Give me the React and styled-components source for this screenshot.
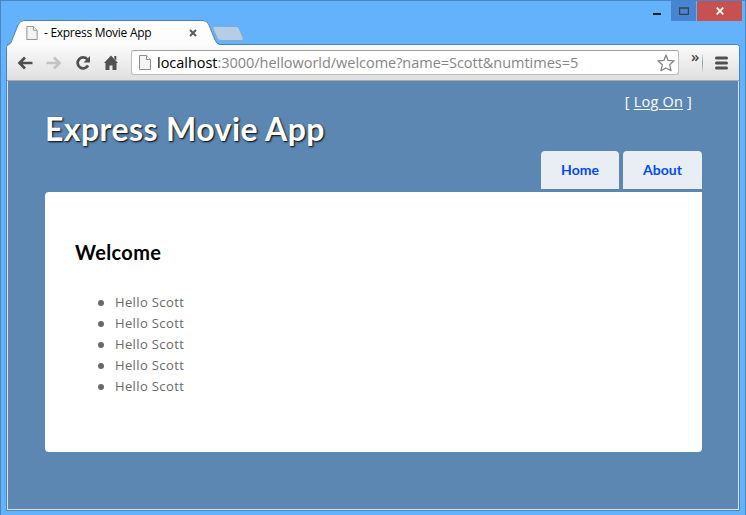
import React from "react";
import styled, { createGlobalStyle } from "styled-components";

const GlobalStyle = createGlobalStyle`
  * { box-sizing: border-box; }
  body { margin: 0; overflow: hidden; }
`;

const uiFont = `"Open Sans", "Noto Sans", sans-serif`;
const siteFont = `"Lato", "Noto Sans", sans-serif`;

const BrowserWindow = styled.div`
  width: 746px;
  height: 515px;
  display: flex;
  flex-direction: column;
  background: #65b2fc;
  border: 1px solid #4786c1;
  border-bottom: 0;
  padding: 0 5px 4px;
  font-family: ${uiFont};
`;

const TitleBar = styled.header`
  height: 43px;
  flex: none;
  display: flex;
  justify-content: space-between;
`;

const TabStrip = styled.div`
  display: flex;
  align-items: flex-end;
`;

const Tab = styled.div`
  position: relative;
  z-index: 1;
  width: 214px;
  height: 25px;
  margin-bottom: -1px;
  padding: 1px 23px 0 20px;
  display: flex;
  align-items: center;
`;

const TabShape = styled.svg`
  position: absolute;
  left: 0;
  top: 0;
`;

const TabTitle = styled.span`
  position: relative;
  flex: 1;
  margin-left: 6px;
  font-size: 12px;
  line-height: 16px;
  letter-spacing: -0.28px;
  color: #000;
  white-space: nowrap;
`;

const Icon = styled.svg`
  position: relative;
  display: block;
  flex: none;
`;

const NewTab = styled.svg`
  display: block;
  margin: 0 0 3px -8px;
`;

const Controls = styled.div`
  display: flex;
  align-items: flex-start;
  margin-right: -2px;
`;

const Control = styled.button`
  width: ${(p) => p.$width}px;
  height: 20px;
  margin: 0 ${(p) => p.$gap || 0}px 0 0;
  padding: 0;
  border: 0;
  display: flex;
  align-items: center;
  justify-content: center;
  background: ${(p) => p.$bg || "transparent"};
`;

const Client = styled.div`
  flex: 1;
  display: flex;
  flex-direction: column;
  border: 1px solid #4786b9;
  border-radius: 4px 4px 0 0;
  background: #dce6ee;
  padding: 0 1px 1px;
  overflow: hidden;
`;

const Toolbar = styled.div`
  height: 36px;
  flex: none;
  display: flex;
  align-items: center;
  margin: 0 -1px;
  padding: 0 10px;
  border-bottom: 1px solid #a9a9a9;
  background: linear-gradient(#fbfbfb, #dfdfdf);
`;

const NavButtons = styled.div`
  display: flex;
  align-items: center;
  gap: 13px;
  width: 114px;
`;

const AddressBar = styled.div`
  width: 548px;
  height: 25px;
  display: flex;
  align-items: center;
  padding: 0 3px 0 7px;
  background: #fff;
  border: 1px solid #bcbcbc;
  border-top-color: #a0a0a0;
  border-radius: 3px;
`;

const Url = styled.span`
  flex: 1;
  margin-left: 6px;
  font-size: 14.5px;
  line-height: 20px;
  letter-spacing: -0.03px;
  color: #858585;
  white-space: nowrap;
`;

const Host = styled.span`
  color: #000;
`;

const More = styled.span`
  margin-left: 12px;
  width: 11px;
  height: 32px;
  font-size: 15px;
  line-height: 18px;
  font-weight: 600;
  color: #444;
`;

const Divider = styled.span`
  width: 1px;
  height: 18px;
  background: linear-gradient(#ddd, #999 50%, #ddd);
`;

const Page = styled.main`
  flex: 1;
  padding: 0 36px 0 37px;
  background: #5c87b2;
  font-family: ${siteFont};
`;

const SiteHeader = styled.div`
  height: 111px;
  display: flex;
  justify-content: space-between;
`;

const SiteTitle = styled.h1`
  margin: 28px 0 0;
  font-size: 32px;
  line-height: 40px;
  font-weight: 700;
  letter-spacing: 0.42px;
  color: #fff;
  text-shadow: 1px 1px 2px #000;
  white-space: nowrap;
`;

const HeaderSide = styled.div`
  display: flex;
  flex-direction: column;
  justify-content: space-between;
  align-items: flex-end;
`;

const LogOn = styled.div`
  padding: 10px 10px 0 0;
  font-family: ${uiFont};
  font-size: 14.5px;
  line-height: 22px;
  font-weight: 500;
  letter-spacing: 0.2px;
  color: #fff;
  white-space: pre;
`;

const LogOnLink = styled.a`
  text-decoration: underline;
  text-underline-offset: 2px;
`;

const Menu = styled.nav`
  display: flex;
  gap: 4px;
  margin-bottom: 3px;
`;

const MenuItem = styled.a`
  width: ${(p) => p.$width}px;
  height: 38px;
  padding-bottom: 1px;
  display: flex;
  align-items: center;
  justify-content: center;
  background: #e8eef4;
  border-radius: 4px 4px 0 0;
  font-size: 14px;
  font-weight: 700;
  color: #034af3;
`;

const Panel = styled.section`
  height: 260px;
  padding: 45px 30px 0;
  background: #fff;
  border-radius: 4px 0 4px 4px;
`;

const Heading = styled.h2`
  margin: 0;
  font-size: 20px;
  line-height: 30px;
  font-weight: 700;
  letter-spacing: 0.35px;
  color: #000;
`;

const Greetings = styled.ul`
  list-style: none;
  margin: 25px 0 0;
  padding: 0 0 0 23px;
`;

const Greeting = styled.li`
  height: 21px;
  display: flex;
  align-items: center;
  gap: 11px;
  font-family: ${uiFont};
  font-size: 13px;
  line-height: 21px;
  letter-spacing: 0.37px;
  color: #696969;

  &::before {
    content: "";
    width: 6px;
    height: 6px;
    border-radius: 50%;
    background: #696969;
  }
`;

const PageIcon = ({ width, height }) => (
  <Icon width={width} height={height} viewBox="0 0 12 15">
    <path d="M.5.5h7l4 4v10H.5z" fill="#f4f4f4" stroke="#8b8b8b" />
    <path d="M7.5.5v4h4" fill="#fff" stroke="#8b8b8b" />
  </Icon>
);

export default function App() {
  return (
    <>
      <GlobalStyle />
      <BrowserWindow>
        <TitleBar>
          <TabStrip>
            <Tab>
              <TabShape width="214" height="25" viewBox="0 0 214 25">
                <path
                  d="M1 25C4 25 5 23 6 20L12 5Q14 .5 18 .5H197Q201 .5 203 5L209 20Q211 24.5 214 24.5V25Z"
                  fill="#fdfdfd"
                />
                <path
                  d="M1 24.5C4 24.5 5 23 6 20L12 5Q14 .5 18 .5H197Q201 .5 203 5L209 20Q211 24.5 214 24.5"
                  fill="none"
                  stroke="#4786b9"
                />
              </TabShape>
              <PageIcon width={12} height={14} />
              <TabTitle>- Express Movie App</TabTitle>
              <Icon width="8" height="8" viewBox="0 0 8 8">
                <path d="M1 1l6 6M7 1L1 7" stroke="#5b5b5b" strokeWidth="2" />
              </Icon>
            </Tab>
            <NewTab width="32" height="15" viewBox="0 0 32 16" preserveAspectRatio="none">
              <path
                d="M3 .5H24Q26 .5 27 2.500L31 12.500Q32 15.500 29.500 15.500H9Q6.500 15.500 5.500 13.500L1 3Q0 .5 3 .5Z"
                fill="#b6cee5"
                stroke="#7fa9d0"
              />
            </NewTab>
          </TabStrip>
          <Controls>
            <Control $width={28}>
              <Icon width="8" height="20"><path d="M0 12h8v2H0z" fill="#1b1b1b" /></Icon>
            </Control>
            <Control $width={25} $gap={1} $bg="#4785d2">
              <Icon width="10" height="8"><path d="M.5 1H9.500V7.500H.5zM0 1h10" fill="none" stroke="#3b4148" strokeWidth="1.400" /></Icon>
            </Control>
            <Control $width={45} $bg="#c75050">
              <Icon width="8" height="8" viewBox="0 0 8 8"><path d="M.7.7l6.600 6.600M7.300.7L.7 7.300" stroke="#fff" strokeWidth="1.800" /></Icon>
            </Control>
          </Controls>
        </TitleBar>
        <Client>
          <Toolbar>
            <NavButtons>
              <Icon width="16" height="14" viewBox="0 0 16 14">
                <path d="M8 1.500L2.500 7 8 12.500M2.500 7h13" fill="none" stroke="#505050" strokeWidth="2.700" />
              </Icon>
              <Icon width="16" height="14" viewBox="0 0 16 14">
                <path d="M8 1.500l5.500 5.500L8 12.500M13.500 7H.5" fill="none" stroke="#c3c3c3" strokeWidth="2.700" />
              </Icon>
              <Icon width="16" height="16" viewBox="0 0 16 16">
                <path d="M12.300 4.300A5.500 5.500 0 1 0 13 10.500" fill="none" stroke="#505050" strokeWidth="2.700" />
                <path d="M15 1v6.500H8.500z" fill="#505050" />
              </Icon>
              <Icon width="14" height="15" viewBox="0 0 14 15">
                <path d="M7 .5l7 7.500H12.500V15H8.500V10.500H5.500V15H1.500V8H0zM10.300 1h2v4.500l-2-2z" fill="#505050" />
              </Icon>
            </NavButtons>
            <AddressBar>
              <PageIcon width={12} height={15} />
              <Url><Host>localhost</Host>:3000/helloworld/welcome?name=Scott&amp;numtimes=5</Url>
              <Icon width="18" height="18" viewBox="0 0 18 18">
                <path d="M9 1l2.100 5.400 5.900.4-4.300 4 1.300 5.800L9 14l-5 2.600 1.300-5.800-4.300-4 5.900-.4z" fill="#fff" stroke="#858585" strokeWidth="1.300" strokeLinejoin="round" />
              </Icon>
            </AddressBar>
            <More>»</More>
            <Divider />
            <Icon width="25" height="14" viewBox="0 0 25 14">
              <path d="M13.500 2h10M13.500 7h10M13.500 12h10" stroke="#505050" strokeWidth="3" strokeLinecap="round" />
            </Icon>
          </Toolbar>
          <Page>
            <SiteHeader>
              <SiteTitle>Express Movie App</SiteTitle>
              <HeaderSide>
                <LogOn>[ <LogOnLink>Log On</LogOnLink> ]</LogOn>
                <Menu>
                  <MenuItem $width={78}>Home</MenuItem>
                  <MenuItem $width={79}>About</MenuItem>
                </Menu>
              </HeaderSide>
            </SiteHeader>
            <Panel>
              <Heading>Welcome</Heading>
              <Greetings>
                {Array.from({ length: 5 }, (_, i) => (
                  <Greeting key={i}>Hello Scott</Greeting>
                ))}
              </Greetings>
            </Panel>
          </Page>
        </Client>
      </BrowserWindow>
    </>
  );
}
